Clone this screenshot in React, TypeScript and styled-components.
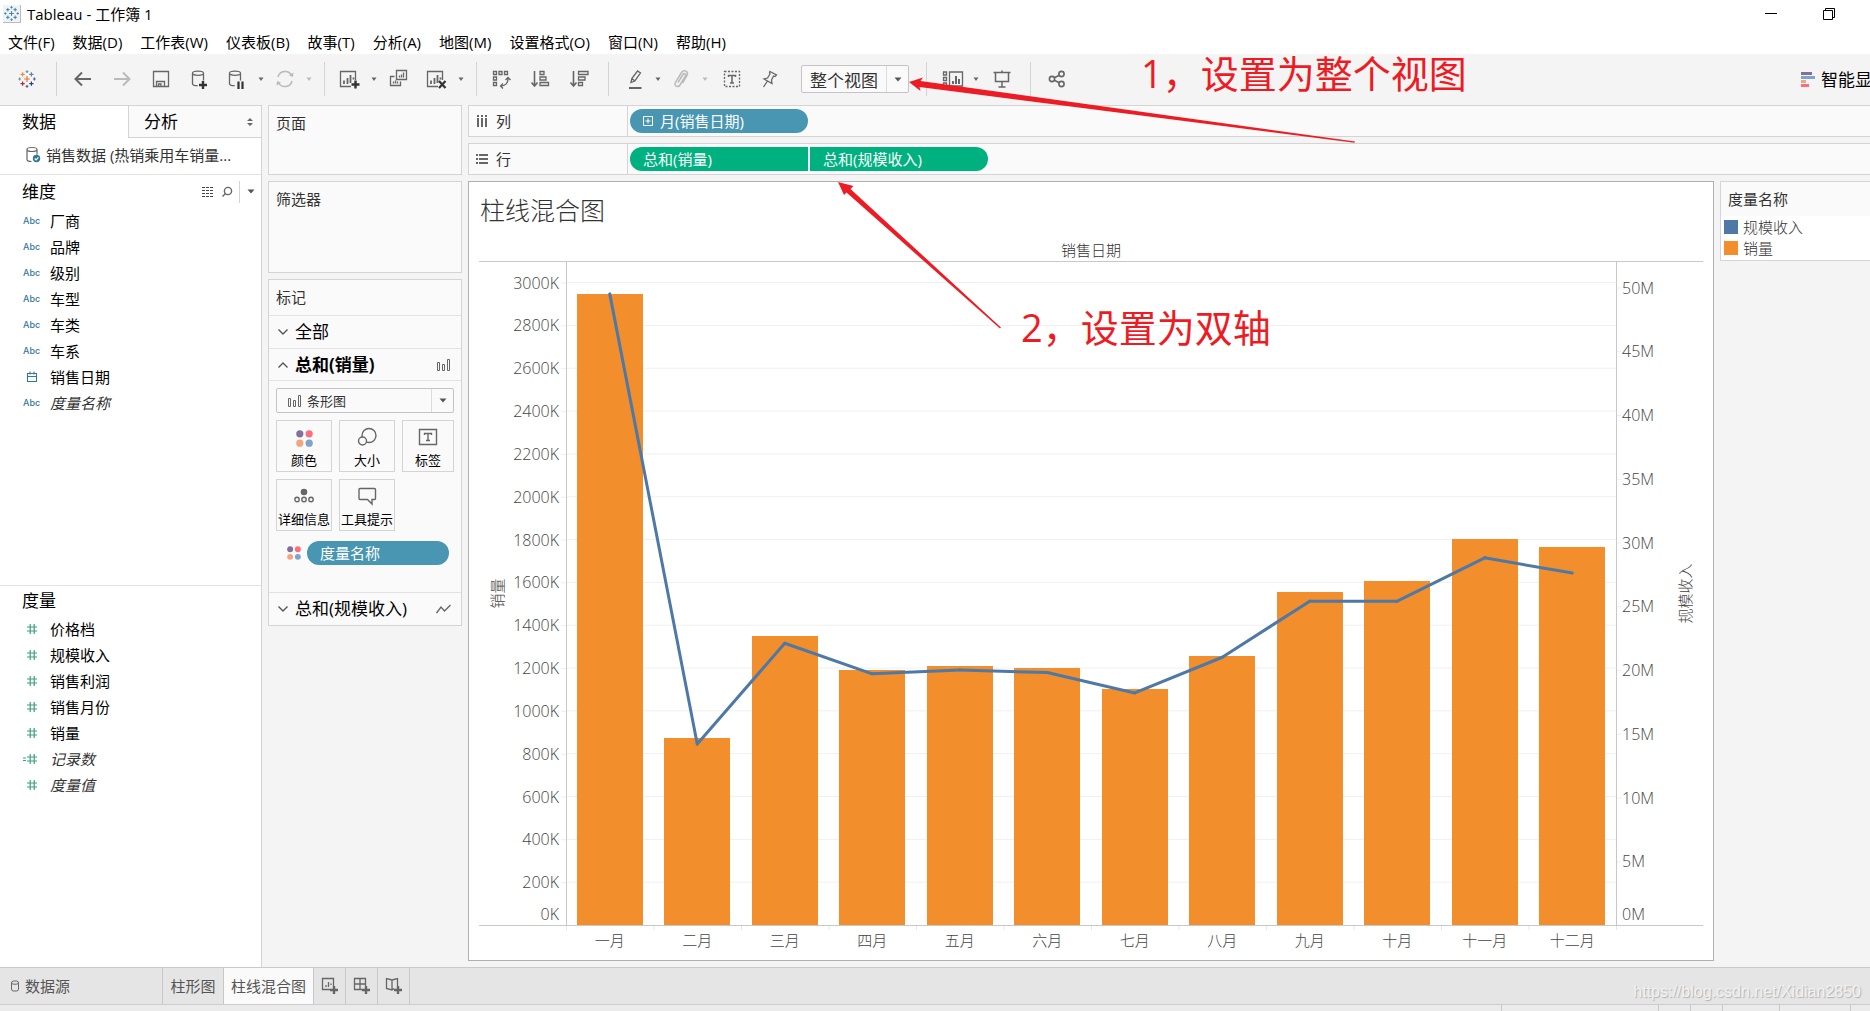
import React from 'react';
import styled, { createGlobalStyle } from 'styled-components';

const UI = `'Open Sans', 'Noto Sans CJK SC', sans-serif`;
const LINE = '#d4d4d4';
const ORANGE = '#f28e2b';
const BLUE = '#4e79a7';

const Global = createGlobalStyle`
  * { box-sizing: border-box; }
  body { margin: 0; background: #f4f4f4; font-family: ${UI}; font-size: 15px; line-height: 20px; color: #000; }
  button, select { font: inherit; color: inherit; background: none; border: 0; padding: 0; margin: 0; }
  h1, h2, ul { margin: 0; padding: 0; font-weight: 400; list-style: none; }
  svg { display: block; }
`;

const Page = styled.div`
  position: relative;
  display: flex;
  flex-direction: column;
  min-height: 100vh;
  overflow: hidden;
`;

/* ---------- window chrome ---------- */
const TitleBar = styled.header`
  display: flex;
  align-items: center;
  height: 28px;
  padding: 0 33px 0 3px;
  background: #fff;
`;
const AppIcon = styled.span`
  display: grid;
  place-items: center;
  width: 18px;
  height: 18px;
  margin-right: 6px;
  background: #f0f2f4;
  border-right: 1px solid #bbb;
  border-bottom: 1px solid #bbb;
`;
const WindowButtons = styled.div`
  display: flex;
  gap: 42px;
  margin-left: auto;
`;
const MenuBar = styled.nav`
  display: flex;
  gap: 18px;
  height: 26px;
  padding: 2px 8px 0;
  align-items: center;
  background: #fff;
`;

/* ---------- toolbar ---------- */
const Toolbar = styled.div`
  display: flex;
  height: 51px;
  align-items: center;
  padding-bottom: 1px;
  background: #f4f4f4;
  white-space: nowrap;
`;
const Group = styled.div<{ $l?: number; $r?: number; $last?: boolean }>`
  display: flex;
  align-items: center;
  height: 34px;
  padding: 0 ${p => p.$r ?? 8}px 0 ${p => p.$l ?? 9}px;
  border-right: ${p => (p.$last ? '0' : `1px solid ${LINE}`)};
`;
const Tool = styled.button<{ $gap?: number; $dim?: boolean }>`
  display: grid;
  place-items: center;
  width: 34px;
  height: 30px;
  margin-left: ${p => p.$gap ?? 0}px;
  opacity: ${p => (p.$dim ? 0.4 : 1)};
`;
const CaretButton = styled.button<{ $w?: number; $dim?: boolean }>`
  display: grid;
  place-items: center;
  width: ${p => p.$w ?? 14}px;
  height: 30px;
  opacity: ${p => (p.$dim ? 0.4 : 1)};
`;
const SelectBox = styled.label<{ $h: number; $size: number }>`
  display: flex;
  align-items: center;
  height: ${p => p.$h}px;
  padding-left: 8px;
  border: 1px solid #c4c4c4;
  border-radius: 2px;
  background: #fafafa;
  color: #333;
  font-size: ${p => p.$size}px;
  select { flex: 1; min-width: 0; appearance: none; outline: 0; }
`;
const SelectArrow = styled.span`
  display: grid;
  place-items: center;
  align-self: stretch;
  width: 22px;
  border-left: 1px solid #dcdcdc;
`;
const FitBox = styled.div`
  width: 108px;
  margin-left: 15px;
  select { padding-top: 3px; }
`;
const ShowMe = styled.button`
  display: flex;
  align-items: center;
  gap: 6px;
  margin: 2px -2px 0 auto;
  font-size: 17px;
`;

/* ---------- body ---------- */
const Body = styled.main`
  display: flex;
  flex: 1;
`;
const DataPane = styled.aside`
  display: flex;
  flex-direction: column;
  width: 262px;
  background: #fff;
  border-right: 1px solid ${LINE};
  border-top: 1px solid ${LINE};
`;
const Tabs = styled.div`
  display: flex;
  height: 32px;
  font-size: 17px;
`;
const Tab = styled.button<{ $active?: boolean }>`
  display: flex;
  align-items: center;
  justify-content: space-between;
  width: ${p => (p.$active ? '128px' : 'auto')};
  flex: ${p => (p.$active ? 'none' : 1)};
  padding: 0 8px 0 ${p => (p.$active ? 22 : 15)}px;
  background: ${p => (p.$active ? '#fff' : '#fafafa')};
  border: solid ${LINE};
  border-width: ${p => (p.$active ? '0' : '0 0 1px 1px')};
`;
const Source = styled.button`
  display: flex;
  align-items: center;
  gap: 4px;
  height: 37px;
  padding: 0 0 2px 25px;
  color: #333;
  border-bottom: 1px solid #e2e2e2;
`;
const FieldSection = styled.section<{ $grow: number }>`
  flex: ${p => p.$grow} 1 0;
  & + & { border-top: 1px solid #e2e2e2; }
`;
const SectionHead = styled.div<{ $h: number }>`
  display: flex;
  align-items: center;
  height: ${p => p.$h}px;
  padding-left: 22px;
  font-size: 17px;
  h2 { flex: 1; font-size: 17px; }
`;
const HeadTool = styled.button`
  display: grid;
  place-items: center;
  width: 19px;
  height: 22px;
`;
const HeadCaret = styled(HeadTool)`
  width: 22px;
  margin-left: 3px;
  border-left: 1px solid ${LINE};
`;
const Field = styled.li<{ $italic?: boolean }>`
  display: grid;
  grid-template-columns: 27px 1fr;
  align-items: center;
  height: 26px;
  padding-left: 23px;
  font-style: ${p => (p.$italic ? 'italic' : 'normal')};
  color: ${p => (p.$italic ? '#333' : '#000')};
`;
const Abc = styled.span`
  font: 500 9px/12px 'Inter', sans-serif;
  color: #33789a;
`;

const Cards = styled.div`
  display: flex;
  flex-direction: column;
  gap: 6px;
  width: 194px;
  margin-left: 6px;
`;
const Card = styled.section<{ $h?: number }>`
  height: ${p => (p.$h ? `${p.$h}px` : 'auto')};
  background: #fafafa;
  border: 1px solid ${LINE};
  > h2 { padding: 7px 7px 8px; font-size: 15px; color: #333; }
`;
const MarkRow = styled.button<{ $h: number; $bold?: boolean }>`
  display: flex;
  align-items: center;
  gap: 6px;
  width: 100%;
  height: ${p => p.$h}px;
  padding: 0 10px 0 8px;
  border-top: 1px solid #e2e2e2;
  font-size: 17px;
  font-weight: ${p => (p.$bold ? 700 : 400)};
  span { flex: 1; text-align: left; }
`;
const MarkBody = styled.div`
  padding: 7px 7px 27px;
  border-top: 1px solid #e2e2e2;
`;
const MarkGrid = styled.div`
  display: grid;
  grid-template-columns: 56px 56px 52px;
  gap: 7px;
  padding: 7px 0 10px;
`;
const MarkButton = styled.button`
  display: flex;
  flex-direction: column;
  align-items: center;
  justify-content: flex-end;
  height: 52px;
  padding-bottom: 1px;
  border: 1px solid ${LINE};
  font-size: 13px;
  line-height: 20px;
  white-space: nowrap;
  svg { margin-bottom: 3px; }
`;
const Encoded = styled.div`
  display: flex;
  align-items: center;
  padding: 0 5px 0 11px;
  gap: 6px;
  svg { flex: none; }
`;
const Pill = styled.button<{ $color: string; $w?: string; $shape?: string }>`
  display: flex;
  align-items: center;
  gap: 7px;
  width: ${p => p.$w ?? '178px'};
  height: 24px;
  padding-left: 13px;
  border-radius: ${p => p.$shape ?? '12px'};
  background: ${p => p.$color};
  color: #fff;
`;

const Work = styled.div`
  display: flex;
  flex-direction: column;
  flex: 1;
  min-width: 0;
  gap: 6px;
  margin-left: 6px;
`;
const Shelf = styled.div`
  display: flex;
  align-items: center;
  height: 32px;
  background: #fafafa;
  border: 1px solid ${LINE};
  border-right: 0;
`;
const ShelfName = styled.div`
  display: flex;
  align-items: center;
  align-self: stretch;
  gap: 8px;
  width: 159px;
  margin-right: 2px;
  padding-left: 7px;
  color: #333;
  border-right: 1px solid ${LINE};
`;
const PillRow = styled.div`
  display: flex;
  gap: 2px;
`;
const Stage = styled.div`
  display: flex;
  flex: 1;
  gap: 6px;
  align-items: stretch;
  padding-bottom: 6px;
`;
const Sheet = styled.section`
  display: flex;
  flex-direction: column;
  flex: 1;
  padding: 0 10px;
  background: #fff;
  border: 1px solid #b0b0b0;
  h1 { padding: 12px 0 13px 1px; font-size: 25px; line-height: 32px; font-weight: 300; color: #333; }
`;
const ChartHead = styled.div`
  font-weight: 300;
  text-align: center;
  line-height: 22px;
  color: #333;
  border-bottom: 1px solid #c8c8c8;
`;
const Plot = styled.div`
  display: grid;
  grid-template-columns: 87px 1fr 87px;
  flex: 1;
  border-bottom: 1px solid #c8c8c8;
`;
const PlotSvg = styled.svg`
  width: 100%;
  height: 100%;
  overflow: visible;
  text { font-family: 'Open Sans', 'Noto Sans CJK SC', sans-serif; font-weight: 300; font-size: 16px; fill: #444; }
  text.title { font-size: 15px; }
`;
const Months = styled.div`
  display: grid;
  grid-template-columns: repeat(12, 1fr);
  height: 34px;
  margin: 0 87px;
  line-height: 28px;
  font-weight: 300;
  text-align: center;
  color: #444;
`;
const Legend = styled.aside`
  align-self: flex-start;
  width: 150px;
  padding-bottom: 2px;
  background: #fff;
  border: 1px solid ${LINE};
  border-right: 0;
  h2 { height: 34px; padding: 7px; font-size: 15px; color: #333; background: #fafafa; }
`;
const LegendItem = styled.li<{ $color: string }>`
  display: flex;
  align-items: center;
  gap: 5px;
  height: 21px;
  padding-left: 3px;
  font-weight: 300;
  color: #333;
  &::before { content: ''; width: 14px; height: 14px; background: ${p => p.$color}; }
`;

/* ---------- bottom ---------- */
const SheetBar = styled.nav`
  display: flex;
  height: 37px;
  background: #e5e5e5;
  border-top: 1px solid #cacaca;
`;
const SheetTab = styled.button<{ $w: number; $active?: boolean; $start?: boolean }>`
  display: flex;
  align-items: center;
  justify-content: ${p => (p.$start ? 'flex-start' : 'center')};
  gap: 6px;
  width: ${p => p.$w}px;
  padding: 0 0 1px ${p => (p.$start ? 11 : 0)}px;
  border-right: 1px solid #c8c8c8;
  background: ${p => (p.$active ? '#fafafa' : 'transparent')};
  color: #555;
  white-space: nowrap;
`;
const StatusBar = styled.footer`
  display: flex;
  justify-content: flex-end;
  height: 7px;
  background: #ebebeb;
  border-top: 1px solid #cdcdcd;
`;
const StatusCell = styled.span<{ $w: number }>`
  width: ${p => p.$w}px;
  border-left: 1px solid #c8c8c8;
`;

/* ---------- annotations lying over the window ---------- */
const Arrows = styled.svg`
  position: absolute;
  left: 0;
  top: 0;
  pointer-events: none;
`;
const Note = styled.p<{ $x: number; $y: number }>`
  position: absolute;
  left: ${p => p.$x}px;
  top: ${p => p.$y}px;
  margin: 0;
  font-size: 38px;
  line-height: 48px;
  color: #ed1c24;
  white-space: nowrap;
`;
const Watermark = styled.p`
  position: absolute;
  right: 9px;
  bottom: 8px;
  margin: 0;
  font: 16px/22px 'Liberation Sans', sans-serif;
  color: #f2f2f2;
  text-shadow: 1px 1px 1px #b0b0b0;
`;

/* ---------- drawings ---------- */
const Icon = ({ children, s = 24, w = 1.3, c = '#666' }: { children: React.ReactNode; s?: number; w?: number; c?: string }) => (
  <svg width={s} height={s} viewBox={`0 0 ${s} ${s}`} fill="none" stroke={c} strokeWidth={w} aria-hidden="true">{children}</svg>
);
const Caret = () => <svg width="8" height="5" viewBox="0 0 8 5" aria-hidden="true"><path d="M1.500 0.500h5L4 4z" fill="#666" /></svg>;
const Drop = () => <svg width="8" height="5" viewBox="0 0 8 5" aria-hidden="true"><path d="M0.5 0.5h7L4 4.5z" fill="#555" /></svg>;

const cross = (x: number, y: number, r: number, c: string) => (
  <path key={`${x}-${y}`} d={`M${x - r} ${y}h${2 * r}M${x} ${y - r}v${2 * r}`} stroke={c} />
);
const Logo = ({ size, mono }: { size: number; mono?: boolean }) => {
  const c = (v: string) => (mono ? '#3f83b0' : v);
  return (
    <svg width={size} height={size} viewBox="0 0 18 18" fill="none" strokeWidth="1.2" aria-hidden="true">
      {cross(9, 9, 2.9, c('#e8762c'))}
      {cross(4.6, 4.4, 2.1, c('#eb912c'))}
      {cross(13.4, 4.4, 2.1, c('#59879b'))}
      {cross(4.6, 13.6, 2.1, c('#c72035'))}
      {cross(13.4, 13.6, 2.1, c('#1f447e'))}
      {cross(9, 1.6, 1.4, c('#7199a6'))}
      {cross(9, 16.4, 1.4, c('#5b6591'))}
      {cross(1.6, 9, 1.4, c('#7199a6'))}
      {cross(16.4, 9, 1.4, c('#5b6591'))}
    </svg>
  );
};
const plus = (x: number, y: number, r = 4) => <path d={`M${x - r} ${y}h${2 * r}M${x} ${y - r}v${2 * r}`} stroke="#333" strokeWidth="2.4" />;
const Db = () => <path d="M4.5 6.2v10.6c0 1 2.2 1.9 5.2 1.9M15.5 6.2v7.3M4.5 6.2c0-1.2 2.4-2 5.5-2s5.5.8 5.5 2-2.4 2.1-5.5 2.1-5.5-.9-5.5-2.1z" />;
const ChartBox = () => (<><path d="M13 19.5H2.5v-15h15V13" /><path d="M6 17v-3.5M9.5 17V11M12.5 16V8M15.5 12.5v-2" strokeWidth="1.8" /></>);
const Bars = () => (
  <svg width="14" height="14" viewBox="0 0 14 14" fill="none" stroke="#666" aria-hidden="true">
    <path d="M.5 4.500h2v8h-2zM5.500 6.500h2v6h-2zM10.500 1.500h2v11h-2z" />
  </svg>
);
const Chevron = ({ up }: { up?: boolean }) => (
  <svg width="12" height="8" viewBox="0 0 12 8" fill="none" stroke="#555" strokeWidth="1.4" aria-hidden="true">
    <path d={up ? 'M1.5 6.5L6 2l4.500 4.500' : 'M1.5 1.500L6 6l4.500-4.500'} />
  </svg>
);
const Dots = ({ size }: { size: number }) => (
  <svg width={size} height={size} viewBox="0 0 16 16" aria-hidden="true">
    <circle cx="3.6" cy="3.600" r="3.400" fill="#83709a" /><circle cx="12.400" cy="3.600" r="3.400" fill="#fa6e7e" />
    <circle cx="3.600" cy="12.400" r="3.400" fill="#f3a67c" /><circle cx="12.400" cy="12.400" r="3.400" fill="#7fa3cb" />
  </svg>
);
const Hash = ({ calc }: { calc?: boolean }) => (
  <svg width="15" height="12" viewBox="0 0 15 12" fill="none" stroke="#3aa17e" strokeWidth="1.200" aria-hidden="true">
    <path d="M4 4h10M4 8h10M7.200 1v10M11.200 1v10" />{calc && <path d="M0 5h3M0 7.500h3" />}
  </svg>
);
const Calendar = () => (
  <svg width="18" height="12" viewBox="0 0 18 12" fill="none" stroke="#33789a" strokeWidth="1.100" aria-hidden="true">
    <path d="M4.500 2.500h9v8h-9zM4.500 5.500h9M7 .5v3M11 .5v3" />
  </svg>
);

/* ---------- data ---------- */
const MENU = ['文件(F)', '数据(D)', '工作表(W)', '仪表板(B)', '故事(T)', '分析(A)', '地图(M)', '设置格式(O)', '窗口(N)', '帮助(H)'];
const MONTHS = ['一月', '二月', '三月', '四月', '五月', '六月', '七月', '八月', '九月', '十月', '十一月', '十二月'];
const SALES = [2948, 874, 1351, 1190, 1208, 1201, 1101, 1257, 1556, 1605, 1801, 1763];
const INCOME = [49.5, 14.2, 22.1, 19.7, 20, 19.8, 18.2, 21, 25.4, 25.4, 28.8, 27.6];
const SALES_MAX = 3096;
const INCOME_MAX = 52;
const sy = (v: number) => `${100 - (v / SALES_MAX) * 100}%`;
const iy = (v: number) => `${100 - (v / INCOME_MAX) * 100}%`;
const cx = (i: number) => `${((i + 0.5) / 12) * 100}%`;
const SALES_TICKS = Array.from({ length: 16 }, (_, i) => i * 200);
const INCOME_TICKS = Array.from({ length: 11 }, (_, i) => i * 5);
const DIMENSIONS = ['厂商', '品牌', '级别', '车型', '车类', '车系', '销售日期', '度量名称'];
const MEASURES = ['价格档', '规模收入', '销售利润', '销售月份', '销量', '记录数', '度量值'];

const Chart = () => (
  <>
    <ChartHead>销售日期</ChartHead>
    <Plot>
      <PlotSvg>
        {SALES_TICKS.map(v => (
          <g key={v}>
            {v > 0 && <svg x="100%" y={sy(v)} overflow="visible"><path d="M-5 .5h5" stroke="#eee" /></svg>}
            <svg x="100%" y={sy(v)} overflow="visible"><text x="-7" y={v ? 6 : -5} textAnchor="end">{v}K</text></svg>
          </g>
        ))}
        <svg x="19" y="50%" overflow="visible"><text className="title" transform="rotate(-90)" textAnchor="middle" y="5">销量</text></svg>
      </PlotSvg>
      <PlotSvg>
        {SALES_TICKS.slice(1).map(v => <line key={v} x1="0" x2="100%" y1={sy(v)} y2={sy(v)} stroke="#f0f0f0" />)}
        {SALES.map((v, i) => (
          <rect key={i} x={`${((i + 0.125) / 12) * 100}%`} width="6.25%" y={sy(v)} height={`${(v / SALES_MAX) * 100}%`} fill={ORANGE} shapeRendering="crispEdges" />
        ))}
        {INCOME.slice(1).map((v, i) => (
          <line key={i} x1={cx(i)} y1={iy(INCOME[i])} x2={cx(i + 1)} y2={iy(v)} stroke={BLUE} strokeWidth="3" strokeLinecap="round" />
        ))}
        <line x1="0" x2="0" y1="0" y2="100%" stroke="#c8c8c8" shapeRendering="crispEdges" />
        <line x1="100%" x2="100%" y1="0" y2="100%" stroke="#c8c8c8" shapeRendering="crispEdges" />
        {Array.from({ length: 13 }, (_, i) => (
          <svg key={i} x={`${(i / 12) * 100}%`} y="100%" overflow="visible"><path d="M.5 1v4" stroke="#e6e6e6" /></svg>
        ))}
      </PlotSvg>
      <PlotSvg>
        {INCOME_TICKS.map(v => (
          <svg key={v} y={iy(v)} overflow="visible">
            {v > 0 && <path d="M1 .5h4" stroke="#eee" />}
            <text x="6" y={v ? 6 : -5}>{v}M</text>
          </svg>
        ))}
        <svg x="70" y="50%" overflow="visible"><text className="title" transform="rotate(-90)" textAnchor="middle" y="5">规模收入</text></svg>
      </PlotSvg>
    </Plot>
    <Months>{MONTHS.map(m => <span key={m}>{m}</span>)}</Months>
  </>
);

const MainToolbar = () => (
  <Toolbar>
    <Group $l={10} $r={12}><Tool aria-label="起始页"><Logo size={18} /></Tool></Group>
    <Group>
      <Tool aria-label="撤消"><Icon w={2}><path d="M20 12H5M11 5.500L4.500 12l6.500 6.500" /></Icon></Tool>
      <Tool $gap={5} $dim aria-label="重做"><Icon w={2}><path d="M4 12h15M13 5.500l6.500 6.500-6.500 6.500" /></Icon></Tool>
      <Tool $gap={5} aria-label="保存"><Icon><path d="M4.500 4.500h15v15h-15zM7.500 19.500v-5h8v5M9.500 19.500v-2.500h2.500v2.500" /></Icon></Tool>
      <Tool $gap={5} aria-label="新建数据源"><Icon><Db />{plus(15, 18)}</Icon></Tool>
      <Tool $gap={3} aria-label="暂停自动更新"><Icon><Db /><path d="M13.500 14.500v7.500M17.500 14.500v7.500" stroke="#333" strokeWidth="2.200" /></Icon></Tool>
      <CaretButton aria-label="更新选项"><Caret /></CaretButton>
      <Tool $dim aria-label="运行更新"><Icon w={1.5}><path d="M5 10a7.300 7.300 0 0 1 13.600-1.500M19 14a7.300 7.300 0 0 1-13.600 1.500" /><path d="M20.500 5.500l-.6 4.500-4-1.800zM3.500 18.500l.6-4.500 4 1.800z" fill="#666" stroke="none" /></Icon></Tool>
      <CaretButton $dim aria-label="运行选项"><Caret /></CaretButton>
    </Group>
    <Group $l={8}>
      <Tool aria-label="新建工作表"><Icon><ChartBox />{plus(17.500, 17.500)}</Icon></Tool>
      <CaretButton aria-label="新建选项"><Caret /></CaretButton>
      <Tool aria-label="复制工作表"><Icon><path d="M10.500 3.500h10v9h-10zM8.500 9.500h-4v9h10v-4M13.500 10.500V8.500M15.500 10.500v-3M17.500 10.500v-5M7.500 16.500v-2M9.500 16.500v-3M11.500 16.500v-2" /></Icon></Tool>
      <Tool $gap={5} aria-label="清除工作表"><Icon><ChartBox /><path d="M14 14l6.500 7M20.500 14L14 21" stroke="#333" strokeWidth="2.200" /></Icon></Tool>
      <CaretButton aria-label="清除选项"><Caret /></CaretButton>
    </Group>
    <Group $l={8} $r={11}>
      <Tool aria-label="交换行和列"><Icon><path d="M3.500 4.500h3v3h-3zM9 4.500h3v3H9zM14.500 4.500h3v3h-3zM3.500 10h3v3h-3zM3.500 15.500h3v3h-3zM18 11c.3 5-2.500 8-7.500 8M15.500 13L18 10.500l2.500 2.500M13 16.500L10.500 19l2.500 2.500" /></Icon></Tool>
      <Tool $gap={5} aria-label="升序排序"><Icon><path d="M5.500 4v14M2.500 15.500l3 3.500 3-3.500" strokeWidth="1.600" /><path d="M11 4.500h4v3h-4zM11 10h6v3h-6zM11 15.500h8.500v3H11z" /></Icon></Tool>
      <Tool $gap={5} aria-label="降序排序"><Icon><path d="M5.500 4v14M2.500 15.500l3 3.500 3-3.500" strokeWidth="1.600" /><path d="M10.500 4.500H20v3h-9.500zM10.500 10h6.500v3h-6.500zM10.500 15.500h4v3h-4z" /></Icon></Tool>
    </Group>
    <Group $r={17}>
      <Tool aria-label="突出显示"><Icon><path d="M8 15.500l.8-4L14.500 4l3 2-5.700 8zM8 15.500l3.800-1.500M8.800 11.500l3 2.500" /><path d="M6 21h12.500" strokeWidth="2" /></Icon></Tool>
      <CaretButton $w={12} aria-label="突出显示选项"><Caret /></CaretButton>
      <Tool $dim aria-label="组成员"><Icon w={1.5}><path d="M9 15.500l5-8c1.200-1.800 3.500-.5 2.500 1.500l-5.500 9c-2 3-6.500.8-4.500-2.700L12.500 5.500c2.500-3.500 7.500-1 5.500 3l-4.500 7.500" /></Icon></Tool>
      <CaretButton $dim aria-label="组选项"><Caret /></CaretButton>
      <Tool $gap={3} aria-label="显示标记标签"><Icon><path d="M4.500 4.500h15v15h-15z" strokeDasharray="2 1.500" /><path d="M8.500 10V8.500h7V10M12 8.500v7.500M10 16h4" strokeWidth="1.500" /></Icon></Tool>
      <Tool $gap={3} aria-label="固定轴"><Icon><path d="M13 4.500l6.500 3.500-1.500 1.500-1.500-.5-2 4 .5 3.500-8-4.500 3.500-1 2.500-4-.5-1.500zM10.500 14l-4 6" /></Icon></Tool>
      <FitBox>
        <SelectBox $h={28} $size={17}>
          <select aria-label="适合"><option>整个视图</option></select>
          <SelectArrow><Drop /></SelectArrow>
        </SelectBox>
      </FitBox>
    </Group>
    <Group $l={9} $r={11}>
      <Tool aria-label="显示/隐藏卡"><Icon><path d="M2.500 5h3v3h-3zM2.500 10.500h3v3h-3zM2.500 16h3v3h-3zM8.500 5h13v14h-13z" /><path d="M12 17v-3M15 17V9M18 17v-5" strokeWidth="2" /></Icon></Tool>
      <CaretButton $w={12} aria-label="卡选项"><Caret /></CaretButton>
      <Tool $gap={3} aria-label="演示模式"><Icon w={1.5}><path d="M3.500 5.500h17M5.500 5.500v9h13v-9M12 3.500v2M12 14.500v5M8.500 20h7" /></Icon></Tool>
    </Group>
    <Group $last>
      <Tool aria-label="共享工作簿"><Icon w={1.600}><circle cx="7" cy="12" r="2.600" /><circle cx="16.500" cy="7" r="2.600" /><circle cx="16.500" cy="17" r="2.600" /><path d="M9.300 10.800l5-2.600M9.300 13.200l5 2.600" /></Icon></Tool>
    </Group>
    <ShowMe>
      <svg width="14" height="16" viewBox="0 0 14 16" aria-hidden="true">
        <path d="M0 0h11v3H0z" fill="#83709a" /><path d="M0 4h14v3H0z" fill="#7fa3cb" />
        <path d="M0 8h5v3H0z" fill="#f3a67c" /><path d="M0 12h8v3H0z" fill="#fa6e7e" />
      </svg>
      智能显
    </ShowMe>
  </Toolbar>
);

export default function App() {
  return (
    <Page>
      <Global />
      <TitleBar>
        <AppIcon><Logo size={15} mono /></AppIcon>
        Tableau - 工作簿 1
        <WindowButtons>
          <button aria-label="最小化"><Icon s={16} c="#000" w={1}><path d="M2 7.500h12" /></Icon></button>
          <button aria-label="还原"><Icon s={16} c="#000" w={1}><path d="M2.500 4.500h9v9h-9zM4.500 4.500v-2h9v9h-2" /></Icon></button>
        </WindowButtons>
      </TitleBar>
      <MenuBar>{MENU.map(m => <button key={m}>{m}</button>)}</MenuBar>
      <MainToolbar />

      <Body>
        <DataPane>
          <Tabs>
            <Tab $active>数据</Tab>
            <Tab>分析<svg width="6" height="8" viewBox="0 0 6 8" fill="#666" aria-hidden="true"><path d="M3 0l3 3H0zM3 8l3-3H0z" /></svg></Tab>
          </Tabs>
          <Source>
            <svg width="17" height="18" viewBox="0 0 17 18" fill="none" stroke="#666" strokeWidth="1.200" aria-hidden="true">
              <path d="M2 3.500v10c0 1.200 2 2 4.500 2M12 3.500v5M2 3.500c0-1.200 2-2 5-2s5 .8 5 2-2 2-5 2-5-.8-5-2z" />
              <circle cx="11.500" cy="12.500" r="3.700" fill="#33789a" stroke="none" /><path d="M9.700 12.500l1.400 1.400 2.300-2.600" stroke="#fff" />
            </svg>
            销售数据 (热销乘用车销量...
          </Source>
          <FieldSection $grow={411}>
            <SectionHead $h={33}>
              <h2>维度</h2>
              <HeadTool aria-label="查看数据"><svg width="12" height="10" viewBox="0 0 12 10" aria-hidden="true"><path d="M0 .5h12M0 3.500h12M0 6.500h12M0 9.500h12" stroke="#444" strokeDasharray="3 1" /></svg></HeadTool>
              <HeadTool aria-label="查找字段"><Icon s={12} w={1.400}><circle cx="7" cy="5" r="3.600" /><path d="M4.500 7.500L1.500 10.500" /></Icon></HeadTool>
              <HeadCaret aria-label="维度菜单"><Drop /></HeadCaret>
            </SectionHead>
            <ul>
              {DIMENSIONS.map(d => (
                <Field key={d} $italic={d === '度量名称'}>{d === '销售日期' ? <Calendar /> : <Abc>Abc</Abc>}{d}</Field>
              ))}
            </ul>
          </FieldSection>
          <FieldSection $grow={382}>
            <SectionHead $h={30}><h2>度量</h2></SectionHead>
            <ul>
              {MEASURES.map(m => (
                <Field key={m} $italic={m === '记录数' || m === '度量值'}><Hash calc={m === '记录数'} />{m}</Field>
              ))}
            </ul>
          </FieldSection>
        </DataPane>

        <Cards>
          <Card $h={70}><h2>页面</h2></Card>
          <Card $h={92}><h2>筛选器</h2></Card>
          <Card>
            <h2>标记</h2>
            <MarkRow $h={33}><Chevron /><span>全部</span></MarkRow>
            <MarkRow $h={32} $bold><Chevron up /><span>总和(销量)</span><Bars /></MarkRow>
            <MarkBody>
              <SelectBox $h={25} $size={13}>
                <Icon s={22}><path d="M3.500 8.500h2v8h-2zM8.500 10.500h2v6h-2zM13.500 5.500h2v11h-2z" strokeWidth="1" /></Icon>
                <select aria-label="标记类型"><option>条形图</option></select>
                <SelectArrow><Drop /></SelectArrow>
              </SelectBox>
              <MarkGrid>
                <MarkButton><Dots size={17} />颜色</MarkButton>
                <MarkButton><Icon s={20} w={1.400}><circle cx="12" cy="8.500" r="7" /><circle cx="5.500" cy="14" r="4" fill="#fafafa" /></Icon>大小</MarkButton>
                <MarkButton><Icon s={20} w={1.400}><path d="M1.500 2.500h17v15h-17z" /><path d="M6.500 8V6.500h7V8M10 6.500v7M8 13.500h4" /></Icon>标签</MarkButton>
                <MarkButton><Icon s={20} w={1.400}><circle cx="10" cy="6" r="2.600" fill="#666" /><circle cx="3" cy="13.500" r="2.200" /><circle cx="10" cy="13.500" r="2.200" /><circle cx="17" cy="13.500" r="2.200" /></Icon>详细信息</MarkButton>
                <MarkButton><Icon s={20} w={1.400}><path d="M3 2.500h14.500q1 0 1 1v9q0 1-1 1H15V18l-4.500-4.500H3q-1 0-1-1v-9q0-1 1-1z" /></Icon>工具提示</MarkButton>
              </MarkGrid>
              <Encoded><Dots size={14} /><Pill $color="#4996b2" $w="100%">度量名称</Pill></Encoded>
            </MarkBody>
            <MarkRow $h={33}>
              <Chevron /><span>总和(规模收入)</span>
              <svg width="15" height="10" viewBox="0 0 15 10" fill="none" stroke="#666" strokeWidth="1.400" aria-hidden="true"><path d="M.5 9L5 3l3.500 4L14.500 1" /></svg>
            </MarkRow>
          </Card>
        </Cards>

        <Work>
          <Shelf>
            <ShelfName>
              <Icon s={12} w={2}><path d="M2 0v2M6 0v2M10 0v2M2 3v9M6 3v9M10 3v9" /></Icon>列
            </ShelfName>
            <Pill $color="#4996b2">
              <svg width="10" height="10" viewBox="0 0 10 10" fill="none" stroke="#fff" aria-hidden="true"><path d="M.5.5h9v9h-9zM2.500 5h5M5 2.500v5" /></svg>
              月(销售日期)
            </Pill>
          </Shelf>
          <Shelf>
            <ShelfName>
              <Icon s={12} w={2}><path d="M0 2h2M0 6h2M0 10h2M3 2h9M3 6h9M3 10h9" /></Icon>行
            </ShelfName>
            <PillRow>
              <Pill $color="#00b180" $shape="12px 0 0 12px">总和(销量)</Pill>
              <Pill $color="#00b180" $shape="0 12px 12px 0">总和(规模收入)</Pill>
            </PillRow>
          </Shelf>
          <Stage>
            <Sheet>
              <h1>柱线混合图</h1>
              <Chart />
            </Sheet>
            <Legend>
              <h2>度量名称</h2>
              <ul>
                <LegendItem $color={BLUE}>规模收入</LegendItem>
                <LegendItem $color={ORANGE}>销量</LegendItem>
              </ul>
            </Legend>
          </Stage>
        </Work>
      </Body>

      <SheetBar>
        <SheetTab $w={163} $start>
          <svg width="8" height="12" viewBox="0 0 8 12" fill="none" stroke="#666" aria-hidden="true"><rect x=".5" y="1" width="7" height="10" rx="2" /><path d="M.5 3.500c2 1 5 1 7 0" /></svg>
          数据源
        </SheetTab>
        <SheetTab $w={61}>柱形图</SheetTab>
        <SheetTab $w={90} $active>柱线混合图</SheetTab>
        <SheetTab $w={32} aria-label="新建工作表"><Icon s={18}><path d="M9 12.500H1.500v-11h11V9M5 10V8M7.500 10V5M10 8V6.500" /><path d="M9 13h8M13 9v8" strokeWidth="2.400" /></Icon></SheetTab>
        <SheetTab $w={32} aria-label="新建仪表板"><Icon s={18}><path d="M9 12.500H1.500v-11h11V9M7 1.500v11M1.500 7h11" /><path d="M9 13h8M13 9v8" strokeWidth="2.400" /></Icon></SheetTab>
        <SheetTab $w={32} aria-label="新建故事"><Icon s={18}><path d="M9 11.500L7 13l-5.500-1.500v-10L7 3l5.500-1.500V9M7 3v10" /><path d="M9 13h8M13 9v8" strokeWidth="2.400" /></Icon></SheetTab>
      </SheetBar>
      <StatusBar>{[157, 32, 32, 57, 71, 20].map((w, i) => <StatusCell key={i} $w={w} />)}</StatusBar>

      <Arrows width="1400" height="340" viewBox="0 0 1400 340" fill="#ed1c24" aria-hidden="true">
        <path d="M909 82L923 77.500L920.500 81L1355 141.500L1354.500 142.800L919.500 87L920.500 91z" />
        <path d="M838 182L853.500 186L850.500 189L1001 327.500L1000 328.500L846.500 192.500L844 195z" />
      </Arrows>
      <Note $x={1141} $y={49}>1，设置为整个视图</Note>
      <Note $x={1021} $y={303}>2，设置为双轴</Note>
      <Watermark>https://blog.csdn.net/Xidian2850</Watermark>
    </Page>
  );
}
